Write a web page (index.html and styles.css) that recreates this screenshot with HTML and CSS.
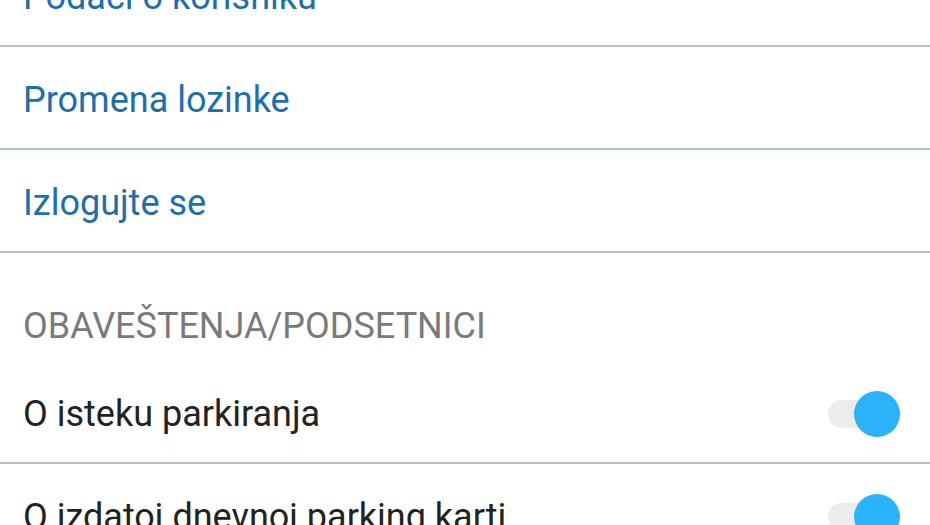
FILE: index.html
```html
<!DOCTYPE html>
<html lang="sr">
<head>
    <meta charset="UTF-8">
    <meta name="viewport" content="width=device-width, initial-scale=1.0">
    <title>Podešavanja</title>
    <link rel="stylesheet" href="styles.css">
</head>
<body>

    <div class="settings">
        <a class="row link" href="#">Podaci o korisniku</a>
        <a class="row link" href="#">Promena lozinke</a>
        <a class="row link" href="#">Izlogujte se</a>

        <div class="section-title">OBAVEŠTENJA/PODSETNICI</div>

        <label class="row">
            <span>O isteku parkiranja</span>
            <input type="checkbox" class="switch" checked>
        </label>
        <label class="row">
            <span>O izdatoj dnevnoj parking karti</span>
            <input type="checkbox" class="switch" checked>
        </label>
    </div>

</body>
</html>
```

FILE: styles.css
```css
body {
    font-family: Roboto, "Noto Sans", Arial, sans-serif;
    background-color: #fff;
    margin: 0;
    padding: 0;
    overflow: hidden;
}
.settings {
    margin-top: -56px;
}
.row {
    display: flex;
    align-items: center;
    justify-content: space-between;
    box-sizing: border-box;
    height: 103px;
    padding: 4px 50px 0 23px;
    border-bottom: 2px solid #afc3d0;
    font-size: 36px;
    color: #222;
    text-decoration: none;
}
.link {
    color: #1b6fb1;
}
.section-title {
    padding: 53px 23px 15px;
    line-height: 40px;
    font-size: 36px;
    color: #7a7a7a;
}
.switch {
    appearance: none;
    -webkit-appearance: none;
    position: relative;
    width: 52px;
    height: 28px;
    margin: 0;
    border-radius: 14px;
    background: #ececec;
}
.switch::after {
    content: "";
    position: absolute;
    top: -9px;
    right: -20px;
    width: 46px;
    height: 46px;
    border-radius: 50%;
    background: #2ab2fb;
}
```
